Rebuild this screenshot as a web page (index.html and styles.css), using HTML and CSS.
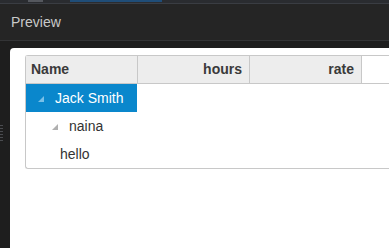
FILE: index.html
```html
<!DOCTYPE html>
<html>
<head>
<meta charset="utf-8">
<link rel="stylesheet" href="styles.css">
</head>
<body>
<div class="topbar">
  <span class="tb-grip"></span>
  <span class="tb-tab"></span>
</div>
<div class="header">Preview</div>
<div class="main">
  <div class="side"><span class="grip"></span></div>
  <div class="panel">
    <div class="grid">
      <div class="grid-head">
        <div class="hcell name">Name</div>
        <div class="hcell num">hours</div>
        <div class="hcell num">rate</div>
      </div>
      <div class="row">
        <div class="cell selected lvl0"><span class="tri"></span>Jack Smith</div>
      </div>
      <div class="row">
        <div class="cell lvl1"><span class="tri"></span>naina</div>
      </div>
      <div class="row">
        <div class="cell lvl2">hello</div>
      </div>
    </div>
  </div>
</div>
</body>
</html>
```
FILE: styles.css
```css
html, body {
  margin: 0;
  padding: 0;
  height: 100%;
  overflow: hidden;
}
body {
  background: #1f1f21;
  font-family: "Liberation Sans", Arial, sans-serif;
  display: flex;
  flex-direction: column;
}
.topbar {
  height: 3px;
  background: #2a2c30;
  border-bottom: 1px solid #3a3d43;
  display: flex;
  align-items: flex-start;
}
.tb-grip {
  width: 15px;
  height: 2px;
  margin-left: 28px;
  background: #55585e;
}
.tb-tab {
  width: 92px;
  height: 2px;
  margin-left: 27px;
  background: #1f4d78;
}
.header {
  height: 36px;
  background: #252525;
  border-bottom: 1px solid #333436;
  color: #c9c9c9;
  font-size: 14px;
  line-height: 36px;
  padding-left: 11px;
}
.main {
  flex: 1;
  display: flex;
  padding-top: 7px;
  background: #1e1e1e;
}
.side {
  width: 10px;
  position: relative;
}
.grip {
  position: absolute;
  left: 0;
  top: 77px;
  width: 3px;
  height: 16px;
  background: repeating-linear-gradient(#4a4c50 0 1px, transparent 1px 3px);
}
.panel {
  flex: 1;
  background: #ffffff;
  border-top-left-radius: 4px;
  padding: 7px 0 0 15px;
}
.grid {
  border: 1px solid #c8c8c8;
  border-right: none;
  border-radius: 3px 0 0 3px;
  color: #333333;
  font-size: 14px;
}
.grid-head {
  display: flex;
  height: 27px;
  border-bottom: 1px solid #c8c8c8;
}
.hcell {
  width: 111px;
  border-right: 1px solid #c8c8c8;
  background: #ededed;
  font-weight: bold;
  line-height: 27px;
  padding: 0 7px;
  box-sizing: content-box;
  width: 97px;
  color: #3a3a3a;
}
.hcell.name {
  padding-left: 5px;
  width: 99px;
}
.hcell.num {
  text-align: right;
}
.row {
  height: 28px;
  display: flex;
}
.cell {
  width: 111px;
  line-height: 28px;
  display: flex;
  align-items: center;
  color: #333;
}
.cell.selected {
  background: #0a87cc;
  color: #ffffff;
}
.lvl0 { padding-left: 12px; box-sizing: border-box; }
.lvl1 { padding-left: 26px; box-sizing: border-box; }
.lvl2 { padding-left: 34px; box-sizing: border-box; }
.tri {
  width: 0;
  height: 0;
  border-left: 6px solid transparent;
  border-bottom: 6px solid #b0b0b0;
  margin-right: 11px;
  margin-top: 2px;
}
.selected .tri {
  border-bottom-color: #79c0e8;
}
```
